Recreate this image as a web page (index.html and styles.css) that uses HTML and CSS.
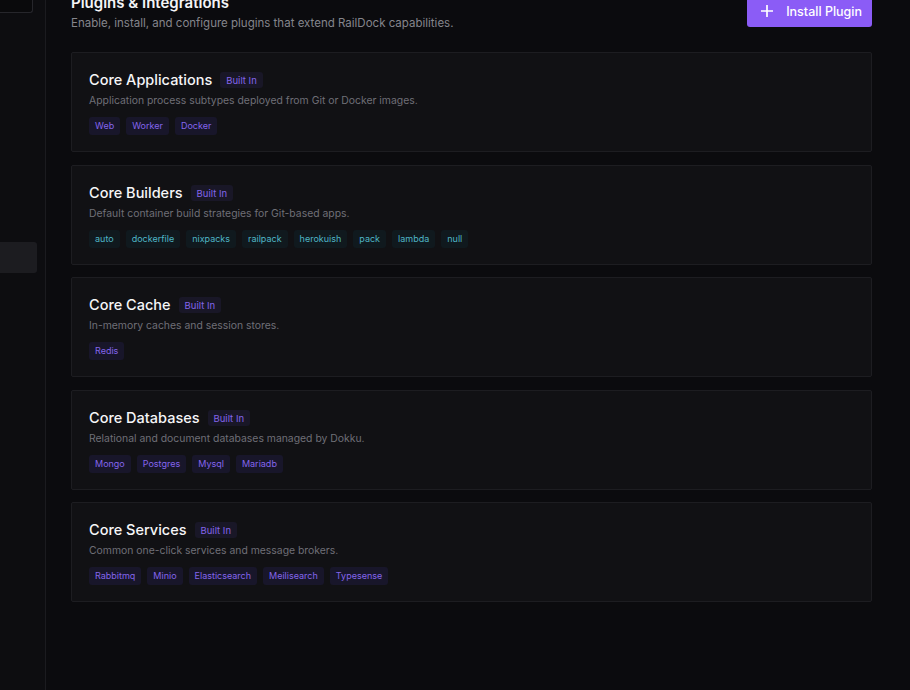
FILE: index.html
```html
<!DOCTYPE html>
<html lang="en">
<head>
<meta charset="utf-8">
<title>Plugins &amp; Integrations</title>
<link rel="stylesheet" href="styles.css">
</head>
<body>
<div class="app">
  <aside class="sidebar">
    <div class="sidebar-search"></div>
    <div class="sidebar-nav">
      <div class="nav-item active"></div>
    </div>
  </aside>
  <main class="main">
    <header class="page-header">
      <div class="page-heading">
        <h1 class="page-title">Plugins &amp; Integrations</h1>
        <p class="page-subtitle">Enable, install, and configure plugins that extend RailDock capabilities.</p>
      </div>
      <button class="btn-primary" type="button">
        <svg class="btn-icon" width="12" height="12" viewBox="0 0 12 12" aria-hidden="true">
          <path d="M6 0.5v11M0.5 6h11" stroke="currentColor" stroke-width="1.7" stroke-linecap="round" fill="none"/>
        </svg>
        <span>Install Plugin</span>
      </button>
    </header>

    <section class="plugin-list">
      <article class="plugin-card">
        <div class="plugin-head">
          <h2 class="plugin-name">Core Applications</h2>
          <span class="badge">Built In</span>
        </div>
        <p class="plugin-desc">Application process subtypes deployed from Git or Docker images.</p>
        <div class="tags">
          <span class="tag">Web</span>
          <span class="tag">Worker</span>
          <span class="tag">Docker</span>
        </div>
      </article>

      <article class="plugin-card">
        <div class="plugin-head">
          <h2 class="plugin-name">Core Builders</h2>
          <span class="badge">Built In</span>
        </div>
        <p class="plugin-desc">Default container build strategies for Git-based apps.</p>
        <div class="tags">
          <span class="tag tag-teal">auto</span>
          <span class="tag tag-teal">dockerfile</span>
          <span class="tag tag-teal">nixpacks</span>
          <span class="tag tag-teal">railpack</span>
          <span class="tag tag-teal">herokuish</span>
          <span class="tag tag-teal">pack</span>
          <span class="tag tag-teal">lambda</span>
          <span class="tag tag-teal">null</span>
        </div>
      </article>

      <article class="plugin-card">
        <div class="plugin-head">
          <h2 class="plugin-name">Core Cache</h2>
          <span class="badge">Built In</span>
        </div>
        <p class="plugin-desc">In-memory caches and session stores.</p>
        <div class="tags">
          <span class="tag">Redis</span>
        </div>
      </article>

      <article class="plugin-card">
        <div class="plugin-head">
          <h2 class="plugin-name">Core Databases</h2>
          <span class="badge">Built In</span>
        </div>
        <p class="plugin-desc">Relational and document databases managed by Dokku.</p>
        <div class="tags">
          <span class="tag">Mongo</span>
          <span class="tag">Postgres</span>
          <span class="tag">Mysql</span>
          <span class="tag">Mariadb</span>
        </div>
      </article>

      <article class="plugin-card">
        <div class="plugin-head">
          <h2 class="plugin-name">Core Services</h2>
          <span class="badge">Built In</span>
        </div>
        <p class="plugin-desc">Common one-click services and message brokers.</p>
        <div class="tags">
          <span class="tag">Rabbitmq</span>
          <span class="tag">Minio</span>
          <span class="tag">Elasticsearch</span>
          <span class="tag">Meilisearch</span>
          <span class="tag">Typesense</span>
        </div>
      </article>
    </section>
  </main>
</div>
</body>
</html>
```

FILE: styles.css
```css
* {
  box-sizing: border-box;
}

html,
body {
  margin: 0;
  height: 100%;
  background: #0b0b0e;
  overflow: hidden;
}

body {
  font-family: Inter, "Noto Sans", "Liberation Sans", sans-serif;
  color: #ededf0;
}

.app {
  display: flex;
  height: 690px;
}

/* Sidebar (collapsed edge) */
.sidebar {
  width: 46px;
  flex: none;
  background: #0d0d10;
  border-right: 1px solid #1b1b1f;
  display: flex;
  flex-direction: column;
}

.sidebar-search {
  width: 33px;
  height: 13px;
  border: 1px solid #26262b;
  border-top: none;
  border-left: none;
  border-bottom-right-radius: 3px;
  background: #0a0a0c;
}

.sidebar-nav {
  padding-top: 229px;
}

.nav-item {
  width: 37px;
  height: 31px;
  border-radius: 0 3px 3px 0;
}

.nav-item.active {
  background: #1c1c20;
}

/* Main content */
.main {
  flex: 1;
  padding: 0 38px 0 25px;
}

.page-header {
  display: flex;
  align-items: flex-start;
  justify-content: space-between;
  margin-top: -11px;
}

.page-title {
  margin: 0;
  font-size: 15px;
  line-height: 28px;
  font-weight: 600;
  color: #f4f4f6;
}

.page-subtitle {
  margin: -3px 0 0;
  font-size: 11.5px;
  line-height: 18px;
  color: #85858c;
}

.btn-primary {
  display: flex;
  align-items: center;
  gap: 13px;
  height: 32px;
  margin-top: 6px;
  padding: 0 10px 0 14px;
  border: none;
  border-radius: 3px;
  background: #8b5cf6;
  color: #ffffff;
  font-family: inherit;
  font-size: 12.5px;
  font-weight: 500;
}

.btn-icon {
  display: block;
}

.plugin-list {
  display: flex;
  flex-direction: column;
  gap: 12.5px;
  margin-top: 20px;
}

.plugin-card {
  height: 100px;
  padding: 17px 17px 0;
  background: #111114;
  border: 1px solid #1d1d21;
  border-radius: 2px;
}

.plugin-head {
  display: flex;
  align-items: center;
  gap: 8px;
}

.plugin-name {
  margin: 0;
  font-size: 14.5px;
  line-height: 20px;
  font-weight: 500;
  color: #f6f6f8;
}

.badge {
  padding: 3px 6px 2px;
  border-radius: 3px;
  background: #191727;
  color: #8465ec;
  font-size: 9.5px;
  line-height: 11px;
}

.plugin-desc {
  margin: 3px 0 0;
  font-size: 10.4px;
  line-height: 16px;
  color: #6f6f77;
}

.tags {
  display: flex;
  gap: 6px;
  margin-top: 8px;
}

.tag {
  padding: 3px 6px;
  border-radius: 3px;
  background: #18162a;
  color: #8465ec;
  font-size: 9px;
  line-height: 12px;
}

.tag-teal {
  background: #10191e;
  color: #4fb6c6;
}
```
